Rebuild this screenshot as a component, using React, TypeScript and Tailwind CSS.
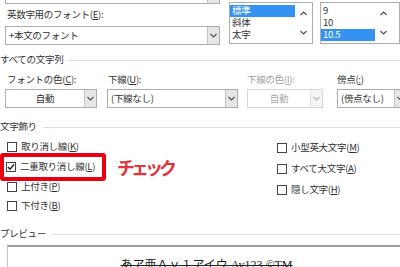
const jp = "font-['Noto_Sans_CJK_JP','Noto_Sans',sans-serif]";

function Caret({ dir = 'down', light = false }: { dir?: 'down' | 'up'; light?: boolean }) {
  return (
    <svg width="7" height="5" viewBox="0 0 7 5">
      <path
        d={dir === 'down' ? 'M0.5 1 L3.5 4 L6.5 1' : 'M0.5 4 L3.5 1 L6.5 4'}
        fill="none"
        stroke={light ? '#b8b8b8' : '#505050'}
        strokeWidth="1.2"
      />
    </svg>
  );
}

function Combo({ text, center = false, disabled = false }: { text: string; center?: boolean; disabled?: boolean }) {
  return (
    <div className={`h-[19px] flex border ${disabled ? 'border-[#d6d6d6]' : 'border-[#abadb3]'}`}>
      <div
        className={`flex-1 flex items-center ${center ? 'justify-center' : 'pl-[3px]'} ${disabled ? 'text-[#a8a8a8]' : ''}`}
      >
        {text}
      </div>
      <div
        className={`w-[12px] flex items-center justify-center border-l ${disabled ? 'border-[#e2e2e2] bg-[#f4f4f4]' : 'border-[#c4c4c4] bg-[#e6e6e6]'}`}
      >
        <Caret light={disabled} />
      </div>
    </div>
  );
}

function Box({ checked = false }: { checked?: boolean }) {
  return (
    <span className="w-[10px] h-[10px] shrink-0 border border-[#444] bg-white flex items-center justify-center">
      {checked && (
        <svg width="8" height="8" viewBox="0 0 8 8">
          <path d="M1 4 L3 6.2 L7 1.5" fill="none" stroke="#222" strokeWidth="1.4" />
        </svg>
      )}
    </span>
  );
}

function CheckRow({ label, k, checked = false }: { label: string; k: string; checked?: boolean }) {
  return (
    <div className="flex items-center gap-[4px] h-[12px] whitespace-nowrap">
      <Box checked={checked} />
      <span>
        {label}(<u>{k}</u>)
      </span>
    </div>
  );
}

function Header({ title }: { title: string }) {
  return (
    <div className="h-[12px] flex items-center">
      <span className="whitespace-nowrap">{title}</span>
      <div className="flex-1 h-px bg-[#dedede] ml-[6px]" />
    </div>
  );
}

function ListBox({ items, selected, listW }: { items: string[]; selected: number; listW: string }) {
  return (
    <div className="mt-[2px] h-[42px] flex border border-[#abadb3] bg-white">
      <div className={`${listW} pt-[2px]`}>
        {items.map((it, i) => (
          <div
            key={it}
            className={`h-[12px] flex items-center pl-[2px] ${i === selected ? 'bg-[#3592f0] text-white' : ''}`}
          >
            {it}
          </div>
        ))}
      </div>
      <div className="w-[17px] shrink-0 flex flex-col items-center justify-between py-[8px]">
        <Caret dir="up" />
        <Caret />
      </div>
    </div>
  );
}

export default function App() {
  return (
    <div
      className={`w-[400px] h-[267px] overflow-hidden bg-white text-[#303030] text-[9.5px] tracking-[-0.3px] leading-none ${jp}`}
    >
      {/* フォント選択 */}
      <div className="flex h-[45px]">
        <div className="w-[237px] pl-[5px] flex flex-col">
          <div className="h-[4px] flex justify-end border border-t-0 border-[#abadb3]">
            <div className="w-[12px] border-l border-[#c4c4c4] bg-[#e6e6e6]" />
          </div>
          <div className="h-[22px] flex items-center pl-[2px]">
            英数字用のフォント(<u>E</u>):
          </div>
          <Combo text="+本文のフォント" />
        </div>
        <div className="ml-[9px] w-[84px]">
          <ListBox items={['標準', '斜体', '太字']} selected={0} listW="w-[66px]" />
        </div>
        <div className="ml-[7px] w-[80px] shrink-0">
          <ListBox items={['9', '10', '10.5']} selected={2} listW="w-[54px]" />
        </div>
      </div>

      <div className="mt-[9px]">
        <Header title="すべての文字列" />
      </div>

      <div className="flex mt-[8px]">
        <div className="ml-[5px] w-[92px] shrink-0">
          <div className="h-[12px] flex items-center pl-[2px]">
            フォントの色(<u>C</u>):
          </div>
          <div className="mt-[3px]">
            <Combo text="自動" center />
          </div>
        </div>
        <div className="ml-[10px] w-[131px] shrink-0">
          <div className="h-[12px] flex items-center pl-[1px]">
            下線(<u>U</u>):
          </div>
          <div className="mt-[3px]">
            <Combo text="(下線なし)" />
          </div>
        </div>
        <div className="ml-[9px] w-[76px] shrink-0">
          <div className="h-[12px] flex items-center text-[#a0a0a0]">
            下線の色(<u>I</u>):
          </div>
          <div className="mt-[3px]">
            <Combo text="自動" center disabled />
          </div>
        </div>
        <div className="ml-[14px] w-[70px] shrink-0">
          <div className="h-[12px] flex items-center">
            傍点(<u>:</u>)
          </div>
          <div className="mt-[3px]">
            <Combo text="(傍点なし)" />
          </div>
        </div>
      </div>

      <div className="mt-[13px]">
        <Header title="文字飾り" />
      </div>

      <div className="flex">
        <div className="w-[277px] shrink-0 flex flex-col">
          <div className="pl-[7px] mt-[8px]">
            <CheckRow label="取り消し線" k="K" />
          </div>
          <div className="flex items-center">
            <div className="w-[106px] h-[28px] border-[4px] border-[#e60012] rounded-[3px] pl-[2px] flex items-center">
              <CheckRow label="二重取り消し線" k="L" checked />
            </div>
            <span className="ml-[11px] text-[18px] font-bold tracking-[-4px] text-[#e2343c] [text-shadow:0_0_2px_#fff]">
              チェック
            </span>
          </div>
          <div className="pl-[7px] h-[11px] flex items-center">
            <CheckRow label="上付き" k="P" />
          </div>
          <div className="pl-[7px] mt-[8px]">
            <CheckRow label="下付き" k="B" />
          </div>
        </div>
        <div className="pt-[9px] flex flex-col gap-[9px]">
          <CheckRow label="小型英大文字" k="M" />
          <CheckRow label="すべて大文字" k="A" />
          <CheckRow label="隠し文字" k="H" />
        </div>
      </div>

      <div className="mt-[16px]">
        <Header title="プレビュー" />
      </div>

      <div className="mt-[5px] ml-[7px] w-[398px] h-[30px] border-t-2 border-t-[#9c9c9c] border-l border-l-[#c6c6c6] pt-[10px] flex justify-center">
        <span className="text-[12px] leading-[16px] tracking-normal text-[#222] whitespace-nowrap line-through decoration-double font-['Liberation_Serif','Noto_Sans_CJK_JP',serif]">
          あア亜Ａｙ１アイウ Ay123 ©TM
        </span>
      </div>
    </div>
  );
}
